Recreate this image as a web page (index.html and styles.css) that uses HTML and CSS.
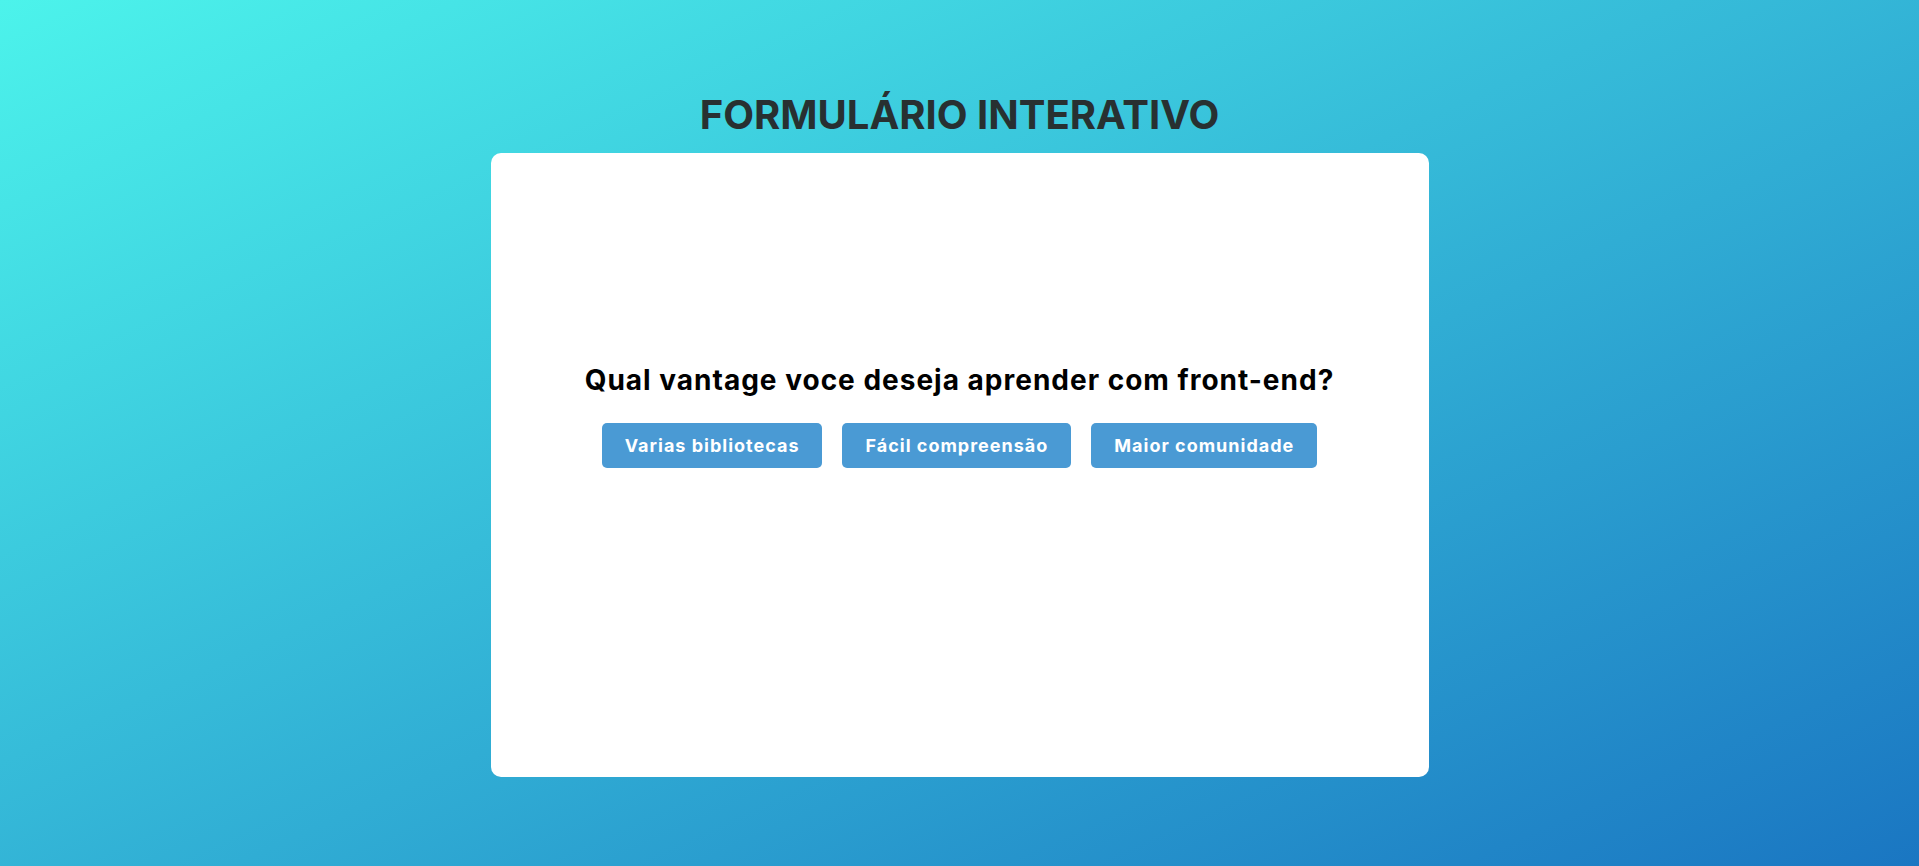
FILE: index.html
```html
<!DOCTYPE html>
<html lang="pt-BR">
<head>
<meta charset="utf-8">
<title>Formulário Interativo</title>
<link rel="stylesheet" href="styles.css">
</head>
<body>
<main class="page">
  <h1 class="title">FORMULÁRIO INTERATIVO</h1>
  <section class="card">
    <h2 class="question">Qual vantage voce deseja aprender com front-end?</h2>
    <div class="options">
      <button class="option">Varias bibliotecas</button>
      <button class="option">Fácil compreensão</button>
      <button class="option">Maior comunidade</button>
    </div>
  </section>
</main>
</body>
</html>
```
FILE: styles.css
```css
html, body {
  margin: 0;
  padding: 0;
  height: 100%;
}
body {
  background: linear-gradient(to bottom right, #4cf3eb, #1a76c2);
  font-family: Inter, "Noto Sans", sans-serif;
}
.page {
  display: flex;
  flex-direction: column;
  align-items: center;
  padding-top: 91px;
}
.title {
  margin: 0 0 14px;
  font-size: 40px;
  font-weight: 700;
  line-height: 48px;
  color: #283031;
}
.card {
  box-sizing: border-box;
  width: 938px;
  height: 624px;
  background: #fff;
  border-radius: 10px;
  padding-top: 210px;
  display: flex;
  flex-direction: column;
  align-items: center;
}
.question {
  margin: 0 0 26px;
  font-size: 28px;
  font-weight: 700;
  line-height: 34px;
  letter-spacing: 1px;
  color: #000;
}
.options {
  display: flex;
  gap: 20px;
}
.option {
  height: 45px;
  padding: 0 23px;
  border: none;
  border-radius: 5px;
  background: #4a9ad4;
  color: #fff;
  font-family: Inter, "Noto Sans", sans-serif;
  font-size: 18px;
  font-weight: 700;
  letter-spacing: 1px;
}
```
